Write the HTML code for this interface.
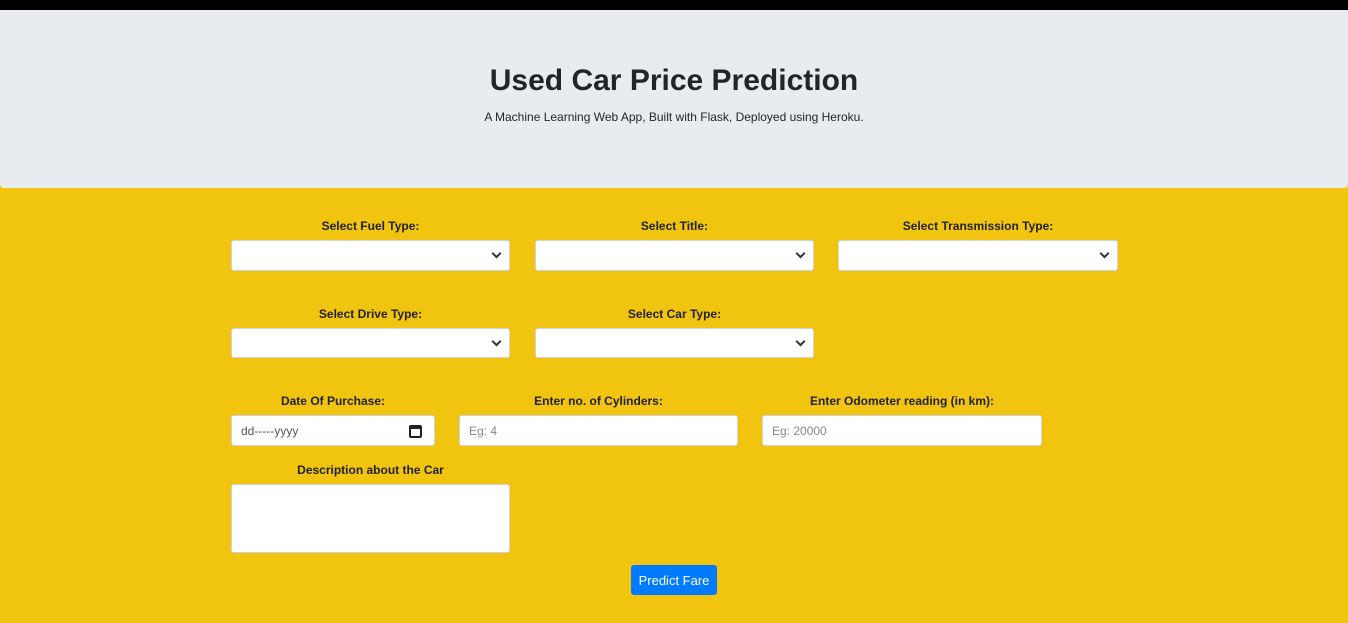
<!DOCTYPE html>
<html><head><style>
body{margin:0;width:1348px;height:623px;background:#f1c40f;font-family:"Liberation Sans",sans-serif;position:relative;overflow:hidden;color:#212529}
.top{position:absolute;left:0;top:0;width:1348px;height:10px;background:#000}
.hdr{position:absolute;left:0;top:10px;width:1348px;height:178px;background:#e9ecef;border-radius:0 0 4px 4px}
h1{position:absolute;top:64px;left:0;width:1348px;text-align:center;margin:0;font-size:30px;font-weight:bold;color:#212529}
.sub{position:absolute;top:110px;left:0;width:1348px;text-align:center;font-size:12px}
.l{position:absolute;font-size:12px;font-weight:bold;text-align:center;color:#222}
.b{position:absolute;background:#fff;border:1px solid #ced4da;border-radius:3px;box-sizing:border-box;font-size:12px;color:#888;padding:0 9px;line-height:30px}
.sel::after{content:"";position:absolute;right:9px;top:9px;width:5px;height:5px;border-right:2px solid #333;border-bottom:2px solid #333;transform:rotate(45deg)}
.btn{position:absolute;left:631px;top:565px;width:86px;height:30px;background:#007bff;color:#fff;border-radius:3px;font-size:13px;text-align:center;line-height:32px}
</style></head><body>
<div class="top"></div>
<div class="hdr"></div>
<h1>Used Car Price Prediction</h1>
<div class="sub">A Machine Learning Web App, Built with Flask, Deployed using Heroku.</div>

<div class="l" style="left:231px;width:279px;top:219px">Select Fuel Type:</div>
<div class="l" style="left:535px;width:279px;top:219px">Select Title:</div>
<div class="l" style="left:838px;width:280px;top:219px">Select Transmission Type:</div>
<div class="b sel" style="left:231px;top:240px;width:279px;height:31px"></div>
<div class="b sel" style="left:535px;top:240px;width:279px;height:31px"></div>
<div class="b sel" style="left:838px;top:240px;width:280px;height:31px"></div>

<div class="l" style="left:231px;width:279px;top:307px">Select Drive Type:</div>
<div class="l" style="left:535px;width:279px;top:307px">Select Car Type:</div>
<div class="b sel" style="left:231px;top:328px;width:279px;height:30px"></div>
<div class="b sel" style="left:535px;top:328px;width:279px;height:30px"></div>

<div class="l" style="left:231px;width:204px;top:394px">Date Of Purchase:</div>
<div class="l" style="left:459px;width:279px;top:394px">Enter no. of Cylinders:</div>
<div class="l" style="left:762px;width:280px;top:394px">Enter Odometer reading (in km):</div>
<div class="b" style="left:231px;top:415px;width:204px;height:31px;color:#555">dd-----yyyy<span style="position:absolute;right:12px;top:9px;width:13px;height:13px;border:2px solid #222;border-top-width:4px;border-radius:2px;box-sizing:border-box"></span></div>
<div class="b" style="left:459px;top:415px;width:279px;height:31px">Eg: 4</div>
<div class="b" style="left:762px;top:415px;width:280px;height:31px">Eg: 20000</div>

<div class="l" style="left:231px;width:279px;top:463px">Description about the Car</div>
<div class="b" style="left:231px;top:484px;width:279px;height:69px"></div>
<div class="btn">Predict Fare</div>
</body></html>
